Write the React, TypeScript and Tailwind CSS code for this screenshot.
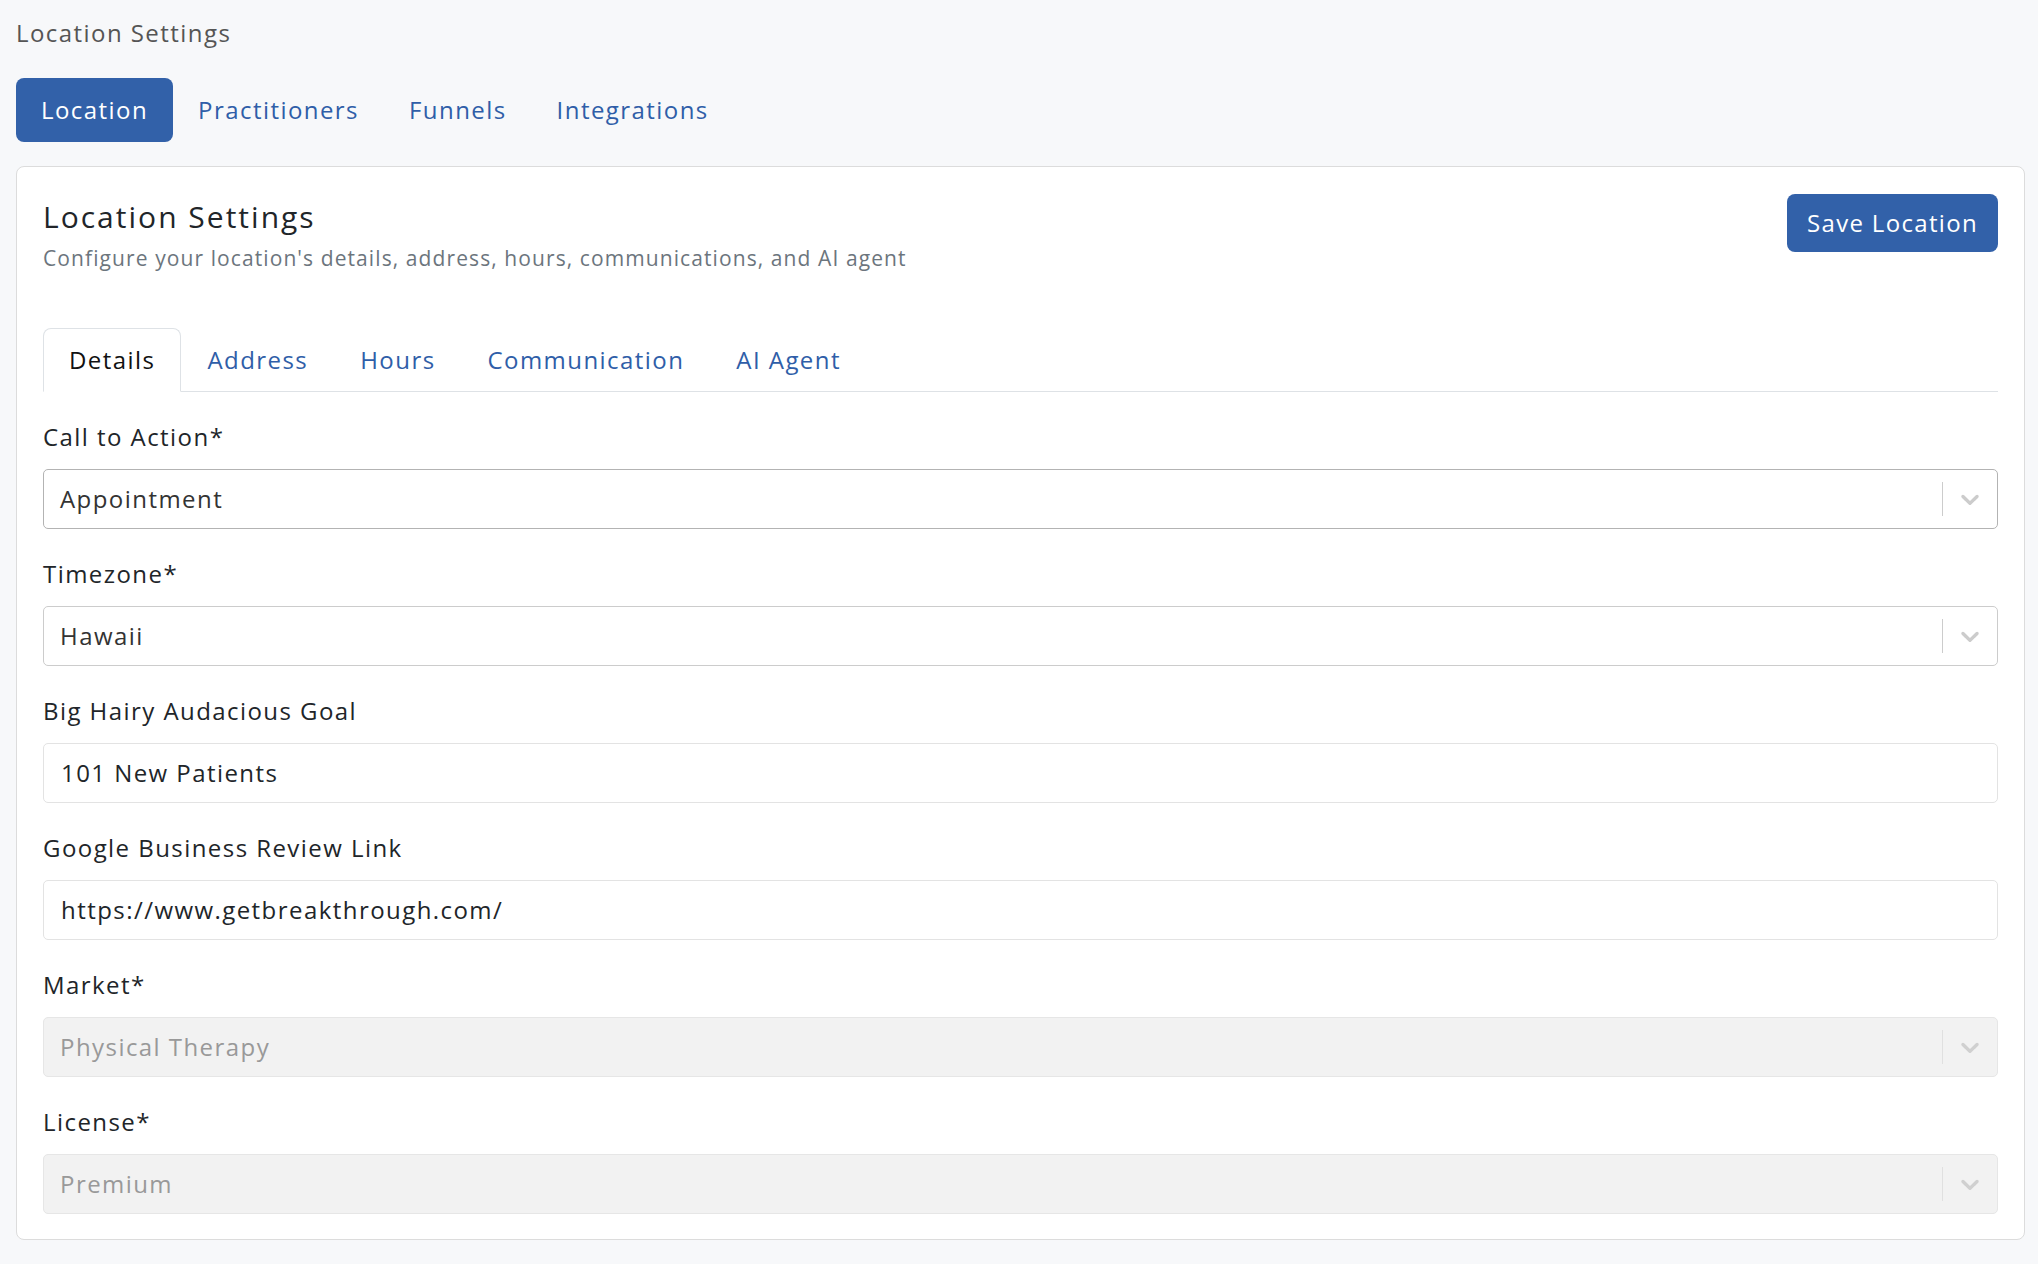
import React from 'react'

const Chevron = () => (
  <svg viewBox="0 0 20 20" className="h-[30px] w-[30px] fill-current" aria-hidden="true">
    <path d="M4.516 7.548c0.436-0.446 1.043-0.481 1.576 0l3.908 3.747 3.908-3.747c0.533-0.481 1.141-0.446 1.574 0 0.436 0.445 0.408 1.197 0 1.615-0.406 0.418-4.695 4.502-4.695 4.502-0.217 0.223-0.502 0.335-0.787 0.335s-0.57-0.112-0.789-0.335c0 0-4.287-4.084-4.695-4.502s-0.436-1.17 0-1.615z" />
  </svg>
)

function SelectBox({ value, disabled, strong }: { value: string; disabled?: boolean; strong?: boolean }) {
  const box = disabled
    ? 'bg-[#f2f2f2] border-[#e6e6e6] text-[#999999]'
    : strong
      ? 'bg-white border-[#b3b3b3] text-[#333333]'
      : 'bg-white border-[#cccccc] text-[#333333]'
  return (
    <div className={`flex h-[60px] items-center rounded-[5px] border ${box}`}>
      <div className="flex-1 pl-[16px]">{value}</div>
      <div className={`h-[34px] w-px ${disabled ? 'bg-[#e0e0e0]' : 'bg-[#cccccc]'}`} />
      <div className={`flex items-center px-[12px] ${disabled ? 'text-[#d0d0d0]' : 'text-[#cccccc]'}`}>
        <Chevron />
      </div>
    </div>
  )
}

function TextBox({ value }: { value: string }) {
  return (
    <div className="flex h-[60px] items-center rounded-[5px] border border-[#e3e3e3] bg-white pl-[17px] text-[#212529]">
      {value}
    </div>
  )
}

function Field({ label, children }: { label: string; children: React.ReactNode }) {
  return (
    <div className="mb-[31px] last:mb-0">
      <div className="mb-[18px] leading-[28px] text-[#212529]">{label}</div>
      {children}
    </div>
  )
}

export default function App() {
  const topTabs = ['Location', 'Practitioners', 'Funnels', 'Integrations']
  const innerTabs = ['Details', 'Address', 'Hours', 'Communication', 'AI Agent']

  return (
    <div className="min-h-screen bg-[#f7f8fa] pt-[19px] pb-[24px] pl-[16px] pr-[13px] font-['Open_Sans',sans-serif] text-[24px] tracking-[0.06em]">
      <div className="leading-[28px] text-[#555555]">Location Settings</div>

      <div className="mt-[31px] flex">
        {topTabs.map((t, i) => (
          <div
            key={t}
            className={
              i === 0
                ? 'flex h-[64px] items-center rounded-[8px] bg-[#3261a9] px-[25px] text-white'
                : 'flex h-[64px] items-center px-[25px] text-[#2f5ea8]'
            }
          >
            {t}
          </div>
        ))}
      </div>

      <div className="mt-[24px] rounded-[8px] border border-[#dcdcdc] bg-white pt-[27px] pb-[25px] pl-[26px] pr-[26px]">
        <div className="flex items-start justify-between">
          <div className="pt-[5px]">
            <h1 className="text-[30px] leading-[36px] tracking-[0.067em] text-[#212529]">Location Settings</h1>
            <p className="mt-[9px] text-[21px] leading-[28px] tracking-[0.052em] text-[#6c757d]">
              Configure your location's details, address, hours, communications, and AI agent
            </p>
          </div>
          <button className="h-[58px] rounded-[8px] bg-[#3261a9] px-[20px] font-medium tracking-[0.055em] text-white">
            Save Location
          </button>
        </div>

        <div className="mt-[56px] flex border-b border-[#dee2e6]">
          {innerTabs.map((t, i) => (
            <div
              key={t}
              className={
                i === 0
                  ? '-mb-px flex h-[64px] items-center rounded-t-[8px] border border-b-white border-[#dee2e6] bg-white px-[25px] text-[#111111]'
                  : 'flex h-[63px] items-center px-[26px] text-[#2f5ea8]'
              }
            >
              {t}
            </div>
          ))}
        </div>

        <div className="mt-[31px]">
          <Field label="Call to Action*">
            <SelectBox value="Appointment" strong />
          </Field>
          <Field label="Timezone*">
            <SelectBox value="Hawaii" />
          </Field>
          <Field label="Big Hairy Audacious Goal">
            <TextBox value="101 New Patients" />
          </Field>
          <Field label="Google Business Review Link">
            <TextBox value="https://www.getbreakthrough.com/" />
          </Field>
          <Field label="Market*">
            <SelectBox value="Physical Therapy" disabled />
          </Field>
          <Field label="License*">
            <SelectBox value="Premium" disabled />
          </Field>
        </div>
      </div>
    </div>
  )
}
